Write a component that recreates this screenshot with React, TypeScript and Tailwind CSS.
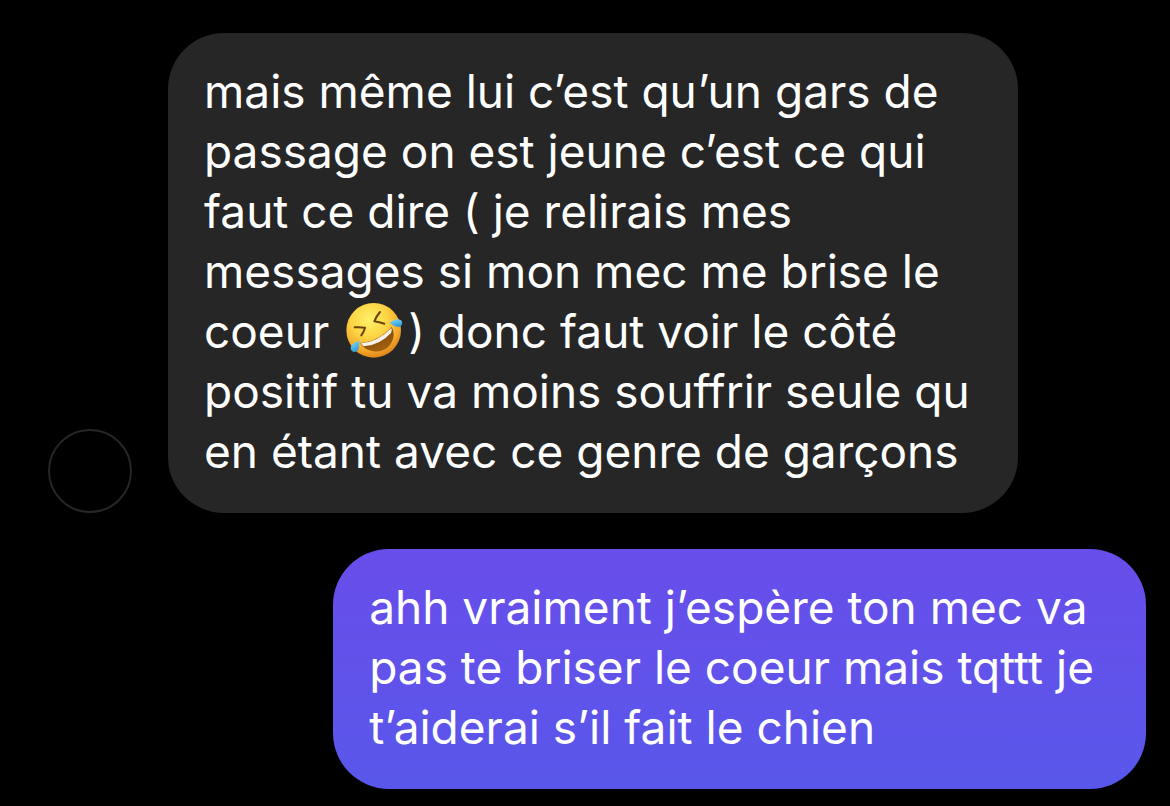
import clsx from "clsx";
import type { ReactNode } from "react";

function RoflEmoji() {
  return (
    <svg
      viewBox="14 6 180 180"
      className="-mt-4 mr-1 -mb-1.5 ml-0.5 inline-block size-[60px] align-middle"
      role="img"
      aria-label="mort de rire"
    >
      <defs>
        <radialGradient id="face" cx="0.42" cy="0.3" r="0.72">
          <stop offset="0" stopColor="#fff06a" />
          <stop offset="0.45" stopColor="#fdd544" />
          <stop offset="0.8" stopColor="#f3a72b" />
          <stop offset="1" stopColor="#dd8219" />
        </radialGradient>
        <linearGradient id="mouth" x1="0" y1="0" x2="0.5" y2="1">
          <stop offset="0" stopColor="#6b3a0a" />
          <stop offset="1" stopColor="#a4600f" />
        </linearGradient>
        <linearGradient id="tear" x1="0" y1="0" x2="0.4" y2="1">
          <stop offset="0" stopColor="#8bdcf8" />
          <stop offset="1" stopColor="#2f9fd8" />
        </linearGradient>
      </defs>
      <circle cx="103" cy="97" r="82" fill="url(#face)" />
      {/* Eyes */}
      <path
        d="M46 88 Q63 87 77 89 Q74 101 66 112 M122 42 Q110 56 105 70 Q120 73 135 77"
        fill="none"
        stroke="#6a4309"
        strokeWidth="6"
        strokeLinecap="round"
        strokeLinejoin="round"
      />
      {/* Mouth and teeth */}
      <path
        d="M63 135 Q118 131 157 87 C173 117 154 151 126 158 C101 165 74 155 63 135Z"
        fill="url(#mouth)"
      />
      <path
        d="M65 136 Q118 131 156 90 Q160 97 155 105 Q121 142 73 145 Q68 141 65 136Z"
        fill="#f6f2ea"
      />
      {/* Tears */}
      <path
        d="M61 128 C44 132 34 141 34 151 C35 161 45 165 52 160 C61 154 58 141 61 128Z"
        fill="url(#tear)"
      />
      <path
        d="M151 75 C161 64 175 61 184 66 C192 72 189 84 179 87 C168 89 160 79 151 75Z"
        fill="url(#tear)"
      />
    </svg>
  );
}

function Bubble({ mine = false, children }: { mine?: boolean; children: ReactNode }) {
  return (
    <div
      className={clsx(
        "rounded-[56px] pt-7 pb-8 pl-9 text-[46px] leading-[60px] text-white",
        mine ? "bg-linear-to-b from-[#684dea] to-[#5957eb] pr-[52px]" : "bg-[#262626] pr-12"
      )}
    >
      <p>{children}</p>
    </div>
  );
}

export default function App() {
  return (
    <main className="flex min-h-screen flex-col gap-9 bg-black pt-[33px] pr-6 pb-[18px] pl-12 font-[Inter,sans-serif]">
      <div className="flex items-end gap-9">
        <div className="size-[84px] shrink-0 rounded-full border-2 border-[#262626]" />
        <Bubble>
          mais même lui c’est qu’un gars de
          <br />
          passage on est jeune c’est ce qui
          <br />
          faut ce dire ( je relirais mes
          <br />
          messages si mon mec me brise le
          <br />
          coeur <RoflEmoji />) donc faut voir le côté
          <br />
          positif tu va moins souffrir seule qu
          <br />
          en étant avec ce genre de garçons
        </Bubble>
      </div>
      <div className="flex justify-end">
        <Bubble mine>
          ahh vraiment j’espère ton mec va
          <br />
          pas te briser le coeur mais tqttt je
          <br />
          t’aiderai s’il fait le chien
        </Bubble>
      </div>
    </main>
  );
}
